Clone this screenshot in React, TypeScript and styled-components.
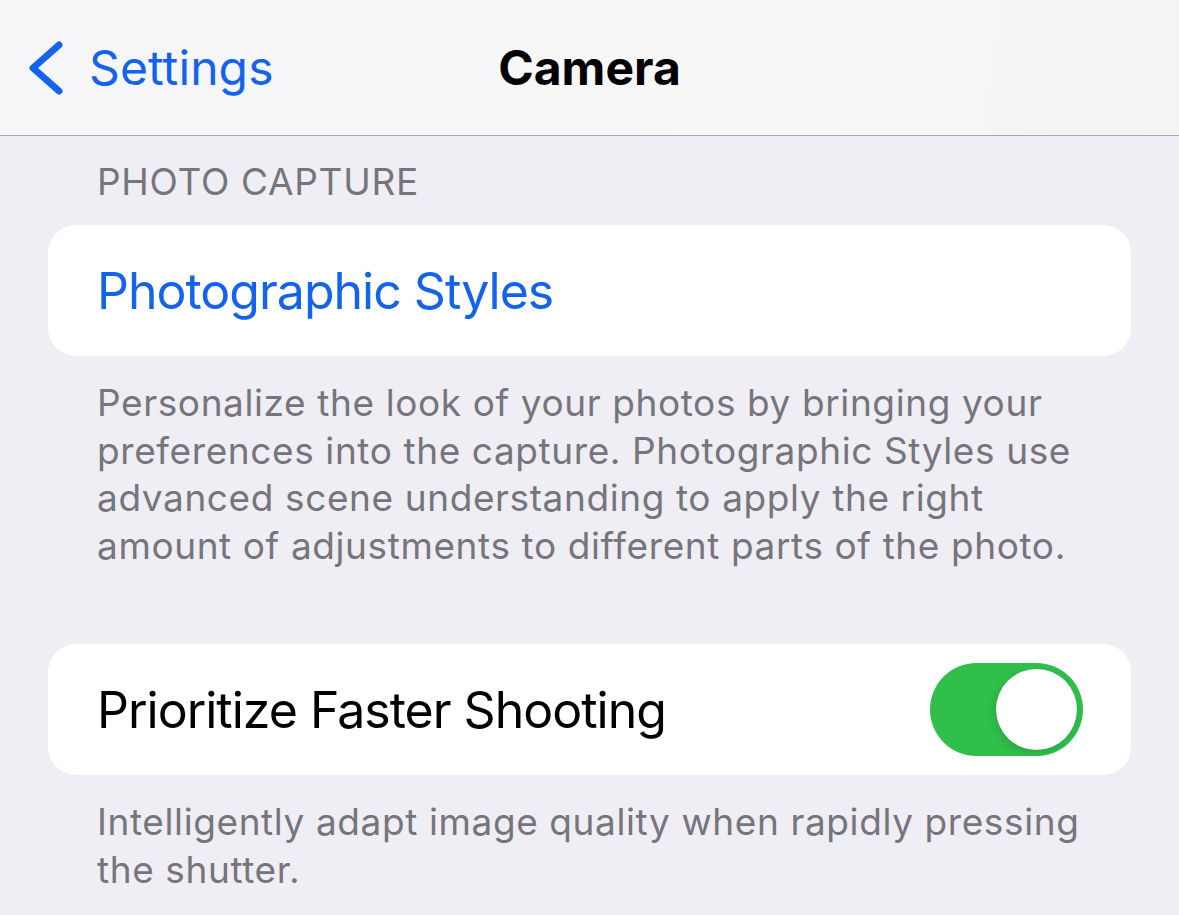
import React from "react";
import styled, { createGlobalStyle } from "styled-components";

const Global = createGlobalStyle`
  html, body { margin: 0; padding: 0; background: #efeef4; }
  body { font-family: Inter, "Noto Sans", sans-serif; -webkit-font-smoothing: antialiased; }
`;

const Screen = styled.div`
  width: 1179px;
  height: 915px;
  overflow: hidden;
  background: #efeef4;
  display: flex;
  flex-direction: column;
`;

const NavBar = styled.header`
  height: 136px;
  flex: none;
  display: grid;
  grid-template-columns: 1fr auto 1fr;
  align-items: center;
  padding: 0 28px;
  background: linear-gradient(100deg, #f6f6f8 0%, #f7f7f8 70%, #f1f4f1 100%);
  border-bottom: 1px solid #a9a9ad;
  box-sizing: border-box;
`;

const BackButton = styled.div`
  display: flex;
  align-items: center;
  gap: 25px;
  color: #1463ec;
  font-size: 48px;
  letter-spacing: 0.1px;
`;

const Title = styled.h1`
  margin: 0;
  font-size: 48px;
  font-weight: 700;
  color: #000;
  letter-spacing: 0;
`;

const Content = styled.main`
  display: flex;
  flex-direction: column;
  padding: 0 48px;
`;

const SectionHeader = styled.div`
  padding: 22px 49px 0;
  font-size: 37px;
  line-height: 48px;
  color: #76757c;
  letter-spacing: 0.7px;
`;

const Card = styled.div<{ $mt: number }>`
  margin-top: ${(p) => p.$mt}px;
  height: 131px;
  background: #fff;
  border-radius: 28px;
  display: flex;
  align-items: center;
  justify-content: space-between;
  padding: 0 48px 0 49px;
`;

const CellLabel = styled.span<{ $link?: boolean }>`
  font-size: 50px;
  color: ${(p) => (p.$link ? "#1463ec" : "#000")};
  letter-spacing: -1px;
`;

const Footer = styled.p`
  margin: 0;
  padding: 23px 49px 0;
  font-size: 37px;
  line-height: 47.5px;
  color: #76757c;
  letter-spacing: 0.6px;
`;

const Toggle = styled.div<{ $on: boolean }>`
  width: 153px;
  height: 93px;
  border-radius: 47px;
  background: ${(p) => (p.$on ? "#30bf4b" : "#e5e5ea")};
  display: flex;
  align-items: center;
  justify-content: ${(p) => (p.$on ? "flex-end" : "flex-start")};
  padding: 0 6px;
  box-sizing: border-box;
`;

const Knob = styled.div`
  width: 81px;
  height: 81px;
  border-radius: 50%;
  background: #fff;
  box-shadow: -2px 3px 8px rgba(0, 0, 0, 0.12), 0 1px 1px rgba(0, 0, 0, 0.06);
`;

const Chevron = () => (
  <svg width="36" height="56" viewBox="0 0 36 56" fill="none">
    <path d="M31 5 L5 28 L31 51" stroke="#1463ec" strokeWidth="7" strokeLinecap="round" strokeLinejoin="round" />
  </svg>
);

export default function App() {
  return (
    <Screen>
      <Global />
      <NavBar>
        <BackButton>
          <Chevron />
          <span>Settings</span>
        </BackButton>
        <Title>Camera</Title>
        <div />
      </NavBar>
      <Content>
        <SectionHeader>PHOTO CAPTURE</SectionHeader>
        <Card $mt={19}>
          <CellLabel $link>Photographic Styles</CellLabel>
        </Card>
        <Footer>
          Personalize the look of your photos by bringing your preferences into the capture. Photographic Styles use
          advanced scene understanding to apply the right amount of adjustments to different parts of the photo.
        </Footer>
        <Card $mt={75}>
          <CellLabel>Prioritize Faster Shooting</CellLabel>
          <Toggle $on>
            <Knob />
          </Toggle>
        </Card>
        <Footer>Intelligently adapt image quality when rapidly pressing the shutter.</Footer>
      </Content>
    </Screen>
  );
}
